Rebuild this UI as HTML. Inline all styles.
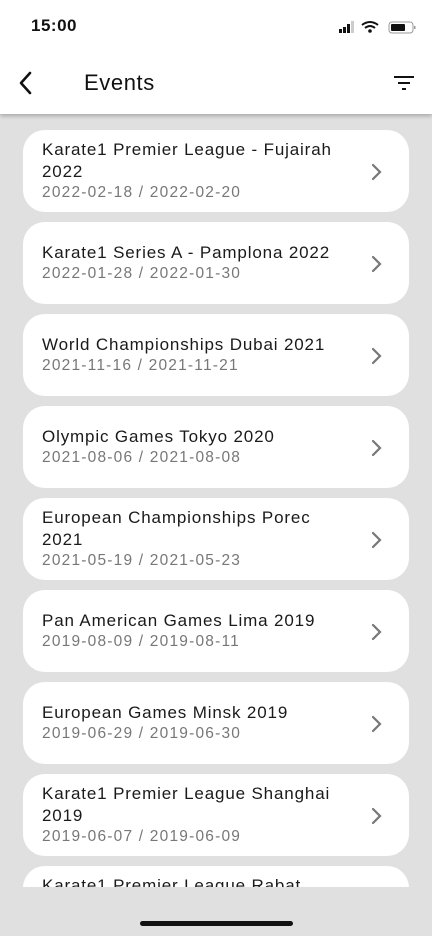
<!DOCTYPE html>
<html><head><style>
body{margin:0;width:432px;height:936px;background:#e0e0e0;font-family:"Liberation Sans",sans-serif;position:relative;overflow:hidden}
.hdr{position:absolute;left:0;top:0;width:432px;height:114px;background:#fff;box-shadow:0 2px 4px rgba(0,0,0,.25);z-index:2}
.time{position:absolute;left:31px;top:16px;font-size:17px;font-weight:bold;color:#111;letter-spacing:0.5px}
.title{position:absolute;left:84px;top:70px;font-size:22px;color:#111;letter-spacing:0.6px}
.list{position:absolute;left:0;top:114px;width:432px;height:773px;overflow:hidden}
.card{position:absolute;left:23px;width:386px;height:82px;background:#fff;border-radius:22px;display:flex;flex-direction:column;justify-content:center;padding-left:19px;box-sizing:border-box}
.t{font-size:17px;line-height:22px;color:#1a1a1a;width:305px;letter-spacing:0.85px}
.d{font-size:15.5px;line-height:20px;color:#777;margin-top:0px;letter-spacing:1.2px}
.chev{position:absolute;right:26px;top:33px}
.home{position:absolute;left:140px;top:921px;width:153px;height:5px;border-radius:3px;background:#111}
</style></head><body>
<div class="hdr">
<div class="time">15:00</div>
<svg style="position:absolute;left:338px;top:20px" width="80" height="14" viewBox="0 0 80 14">
<rect x="1" y="9" width="3" height="4" fill="#111"/><rect x="5" y="7" width="3" height="6" fill="#111"/><rect x="9" y="4" width="3" height="9" fill="#111"/><rect x="13" y="1" width="3" height="12" fill="#ccc"/>
<path d="M24 5 Q32 -1 40 5" stroke="#111" stroke-width="2" fill="none"/><path d="M27 8 Q32 4 37 8" stroke="#111" stroke-width="2" fill="none"/><circle cx="32" cy="11" r="1.8" fill="#111"/>
<rect x="51" y="2" width="24" height="11" rx="3" fill="none" stroke="#999" stroke-width="1"/><rect x="53" y="4" width="14" height="7" rx="1" fill="#111"/><rect x="76" y="6" width="1.5" height="3" fill="#999"/>
</svg>
<svg style="position:absolute;left:17px;top:71px" width="18" height="24" viewBox="0 0 18 24"><path d="M13 2 L4 12 L13 22" stroke="#111" stroke-width="2.6" fill="none" stroke-linecap="round" stroke-linejoin="round"/></svg>
<div class="title">Events</div>
<svg style="position:absolute;left:393px;top:75px" width="22" height="16" viewBox="0 0 22 16"><rect x="1" y="1" width="20" height="2" fill="#111"/><rect x="5" y="7" width="12" height="2" fill="#111"/><rect x="9" y="13" width="4" height="2" fill="#111"/></svg>
</div>
<div class="list">
<div class="card" style="top:16px"><div class="t">Karate1 Premier League - Fujairah 2022</div><div class="d">2022-02-18 / 2022-02-20</div><svg class="chev" width="12" height="18" viewBox="0 0 12 18"><path d="M2 2 L9 9 L2 16" stroke="#777" stroke-width="2.2" fill="none" stroke-linecap="round"/></svg></div>
<div class="card" style="top:108px"><div class="t">Karate1 Series A - Pamplona 2022</div><div class="d">2022-01-28 / 2022-01-30</div><svg class="chev" width="12" height="18" viewBox="0 0 12 18"><path d="M2 2 L9 9 L2 16" stroke="#777" stroke-width="2.2" fill="none" stroke-linecap="round"/></svg></div>
<div class="card" style="top:200px"><div class="t">World Championships Dubai 2021</div><div class="d">2021-11-16 / 2021-11-21</div><svg class="chev" width="12" height="18" viewBox="0 0 12 18"><path d="M2 2 L9 9 L2 16" stroke="#777" stroke-width="2.2" fill="none" stroke-linecap="round"/></svg></div>
<div class="card" style="top:292px"><div class="t">Olympic Games Tokyo 2020</div><div class="d">2021-08-06 / 2021-08-08</div><svg class="chev" width="12" height="18" viewBox="0 0 12 18"><path d="M2 2 L9 9 L2 16" stroke="#777" stroke-width="2.2" fill="none" stroke-linecap="round"/></svg></div>
<div class="card" style="top:384px"><div class="t">European Championships Porec 2021</div><div class="d">2021-05-19 / 2021-05-23</div><svg class="chev" width="12" height="18" viewBox="0 0 12 18"><path d="M2 2 L9 9 L2 16" stroke="#777" stroke-width="2.2" fill="none" stroke-linecap="round"/></svg></div>
<div class="card" style="top:476px"><div class="t">Pan American Games Lima 2019</div><div class="d">2019-08-09 / 2019-08-11</div><svg class="chev" width="12" height="18" viewBox="0 0 12 18"><path d="M2 2 L9 9 L2 16" stroke="#777" stroke-width="2.2" fill="none" stroke-linecap="round"/></svg></div>
<div class="card" style="top:568px"><div class="t">European Games Minsk 2019</div><div class="d">2019-06-29 / 2019-06-30</div><svg class="chev" width="12" height="18" viewBox="0 0 12 18"><path d="M2 2 L9 9 L2 16" stroke="#777" stroke-width="2.2" fill="none" stroke-linecap="round"/></svg></div>
<div class="card" style="top:660px"><div class="t">Karate1 Premier League Shanghai 2019</div><div class="d">2019-06-07 / 2019-06-09</div><svg class="chev" width="12" height="18" viewBox="0 0 12 18"><path d="M2 2 L9 9 L2 16" stroke="#777" stroke-width="2.2" fill="none" stroke-linecap="round"/></svg></div>
<div class="card" style="top:752px;justify-content:flex-start;padding-top:9px"><div class="t">Karate1 Premier League Rabat 2019</div><div class="d">2019-01-01 / 2019-01-01</div></div>
</div>
<div class="home"></div>
</body></html>
